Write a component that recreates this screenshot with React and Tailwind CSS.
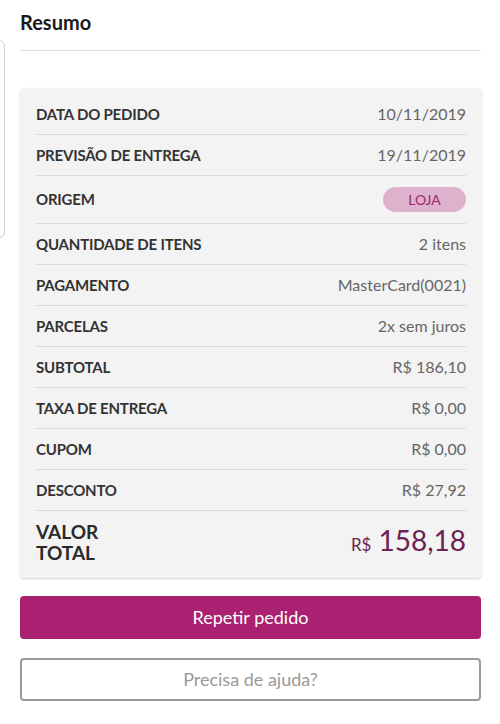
import React from "react";

const rows = [
  ["DATA DO PEDIDO", "10/11/2019"],
  ["PREVISÃO DE ENTREGA", "19/11/2019"],
  ["ORIGEM", null],
  ["QUANTIDADE DE ITENS", "2 itens"],
  ["PAGAMENTO", "MasterCard(0021)"],
  ["PARCELAS", "2x sem juros"],
  ["SUBTOTAL", "R$ 186,10"],
  ["TAXA DE ENTREGA", "R$ 0,00"],
  ["CUPOM", "R$ 0,00"],
  ["DESCONTO", "R$ 27,92"],
];

export default function App() {
  return (
    <div
      className="relative w-[500px] h-[724px] bg-white overflow-hidden"
      style={{ fontFamily: "Lato, 'Open Sans', sans-serif" }}
    >
      <div className="absolute left-[-12px] top-[40px] w-[17px] h-[198px] border border-[#cfcfcf] rounded-[6px]" />
      <div className="px-5 pt-[9px]">
        <h1 className="text-[20px] font-bold text-[#1a1a1a] leading-[26px]">Resumo</h1>
        <div className="mt-[15px] h-px w-[461px] bg-[#dedede]" />
      </div>
      <div className="ml-5 mt-[37px] w-[462px] bg-[#f3f3f3] rounded-[4px] shadow-[0_1px_2px_rgba(0,0,0,0.18)] px-4 pt-[6px]">
        {rows.map(([label, value]) => (
          <div
            key={label}
            className={`flex items-center justify-between border-b border-[#dadada] ${
              value === null ? "h-[48px]" : "h-[41px]"
            }`}
          >
            <span className="text-[15px] font-bold text-[#333333] tracking-[-0.2px]">{label}</span>
            {value === null ? (
              <span className="w-[83px] h-[25px] rounded-full bg-[#deb1cd] text-[#a0286e] text-[14px] flex items-center justify-center">
                LOJA
              </span>
            ) : (
              <span className="text-[16px] text-[#666666]">{value}</span>
            )}
          </div>
        ))}
        <div className="flex items-center justify-between h-[67px] pb-[6px]">
          <span className="text-[19px] font-bold text-[#2a2a2a] leading-[21px]">
            <span className="block">VALOR</span>
            <span className="block">TOTAL</span>
          </span>
          <span className="flex items-baseline gap-[7px] text-[#6b2352]">
            <span className="text-[17px]">R$</span>
            <span className="text-[28px] leading-none">158,18</span>
          </span>
        </div>
      </div>
      <div className="px-5 mt-[18px]">
        <button className="w-[461px] h-[43px] rounded-[4px] bg-[#ab2171] text-white text-[18px] flex items-center justify-center">
          Repetir pedido
        </button>
        <button className="mt-[19px] w-[461px] h-[43px] rounded-[4px] border-2 border-[#9a9a9a] bg-white text-[#9a9a9a] text-[18px] flex items-center justify-center">
          Precisa de ajuda?
        </button>
      </div>
    </div>
  );
}
